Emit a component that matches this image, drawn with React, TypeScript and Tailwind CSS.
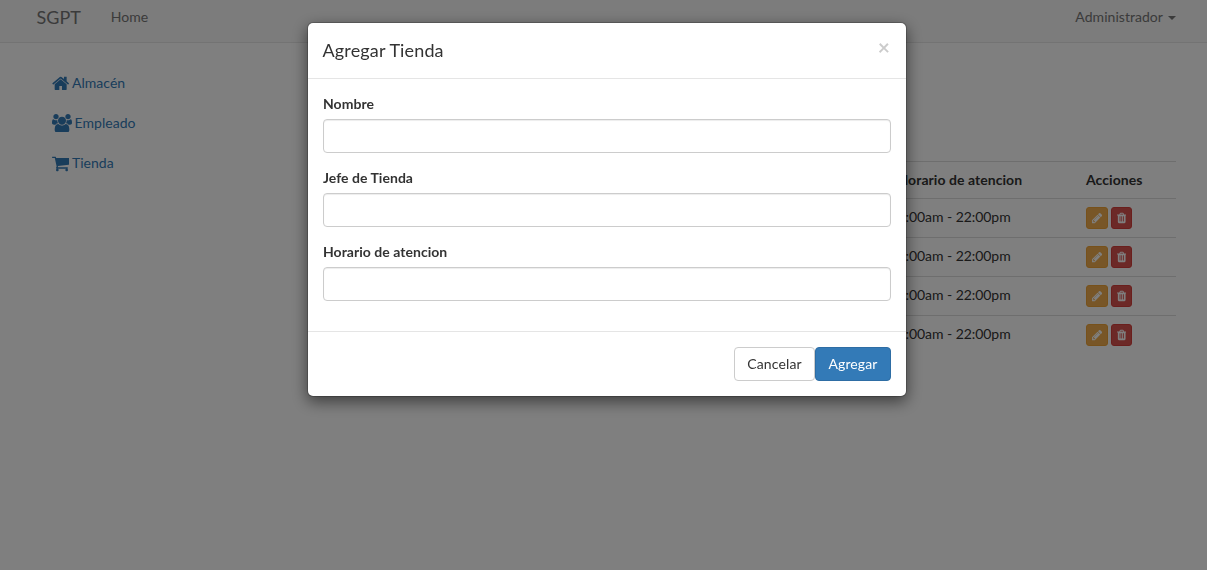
import React from 'react';

type IconProps = { d: string; viewBox: string; className: string };

const HOME =
  'M1472 992v480q0 26-19 45t-45 19h-384v-384h-256v384h-384q-26 0-45-19t-19-45v-480q0-1 .5-3t.5-3l575-474 575 474q1 2 1 6zm223-69l-62 74q-8 9-21 11h-3q-13 0-21-7l-692-577-692 577q-12 8-24 7-13-2-21-11l-62-74q-8-10-7-23.5t11-21.5l719-599q32-26 76-26t76 26l244 204v-195q0-14 9-23t23-9h192q14 0 23 9t9 23v408l219 182q10 8 11 21.5t-7 23.5z';
const USERS =
  'M593 896q-162 5-265 128h-134q-82 0-138-40.5t-56-118.5q0-353 124-353 6 0 43.5 21t97.5 42.5 119 21.5q67 0 133-23-5 37-5 66 0 139 81 256zm1071 637q0 120-73 189.5t-194 69.5h-874q-121 0-194-69.5t-73-189.5q0-53 3.5-103.5t14-109 26.5-108.5 43-97.5 62-81 85.5-53.5 111.5-20q10 0 43 21.5t73 48 107 48 135 21.5 135-21.5 107-48 73-48 43-21.5q61 0 111.5 20t85.5 53.5 62 81 43 97.5 26.5 108.5 14 109 3.5 103.5zm-1024-1277q0 106-75 181t-181 75-181-75-75-181 75-181 181-75 181 75 75 181zm704 384q0 159-112.5 271.5t-271.5 112.5-271.5-112.5-112.5-271.5 112.5-271.5 271.5-112.5 271.5 112.5 112.5 271.5zm576 225q0 78-56 118.5t-138 40.5h-134q-103-123-265-128 81-117 81-256 0-29-5-66 66 23 133 23 59 0 119-21.5t97.5-42.5 43.5-21q124 0 124 353zm-128-609q0 106-75 181t-181 75-181-75-75-181 75-181 181-75 181 75 75 181z';
const CART =
  'M704 1536q0 52-38 90t-90 38-90-38-38-90 38-90 90-38 90 38 38 90zm896 0q0 52-38 90t-90 38-90-38-38-90 38-90 90-38 90 38 38 90zm128-1088v512q0 24-16.5 42.5t-40.5 21.5l-1044 122q13 60 13 70 0 16-24 64h920q26 0 45 19t19 45-19 45-45 19h-1024q-26 0-45-19t-19-45q0-11 8-31.5t16-36 21.5-40 15.5-29.5l-177-823h-204q-26 0-45-19t-19-45 19-45 45-19h256q16 0 28.5 6.5t19.5 15.5 13 24.5 8 26 5.5 29.5 4.5 26h1201q26 0 45 19t19 45z';
const PENCIL =
  'M491 1536l91-91-235-235-91 91v107h128v128h107zm523-928q0-22-22-22-10 0-17 7l-542 542q-7 7-7 17 0 22 22 22 10 0 17-7l542-542q7-7 7-17zm-54-192l416 416-832 832h-416v-416zm683 96q0 53-37 90l-166 166-416-416 166-165q36-38 90-38 53 0 91 38l235 234q37 39 37 91z';
const TRASH =
  'M704 1376v-704q0-14-9-23t-23-9h-64q-14 0-23 9t-9 23v704q0 14 9 23t23 9h64q14 0 23-9t9-23zm256 0v-704q0-14-9-23t-23-9h-64q-14 0-23 9t-9 23v704q0 14 9 23t23 9h64q14 0 23-9t9-23zm256 0v-704q0-14-9-23t-23-9h-64q-14 0-23 9t-9 23v704q0 14 9 23t23 9h64q14 0 23-9t9-23zm-544-992h448l-48-117q-7-9-17-11h-317q-10 2-17 11zm928 32v64q0 14-9 23t-23 9h-96v948q0 83-47 143.5t-113 60.5h-832q-66 0-113-58.5t-47-141.5v-952h-96q-14 0-23-9t-9-23v-64q0-14 9-23t23-9h309l70-167q15-37 54-63t79-26h320q40 0 79 26t54 63l70 167h309q14 0 23 9t9 23z';

function Icon({ d, viewBox, className }: IconProps) {
  return (
    <svg viewBox={viewBox} className={className} fill="currentColor" aria-hidden="true">
      <path d={d} />
    </svg>
  );
}

function Navbar() {
  return (
    <nav className="flex h-[43px] items-start border-b border-[#e7e7e7] bg-[#f8f8f8] pr-[31px] pl-[36.5px] pt-[7px] leading-5 text-[#777]">
      <a className="text-lg leading-5">SGPT</a>
      <a className="ml-[30px]">Home</a>
      <a className="ml-auto flex items-center tracking-[0.04px]">
        Administrador
        <span className="ml-[5px] mt-px border-x-4 border-t-4 border-x-transparent border-t-[#777]" />
      </a>
    </nav>
  );
}

const links = [
  { label: 'Almacén', d: HOME, viewBox: '64 0 1664 1792', icon: 'mt-[0.8px] h-[18.67px] w-[17.33px]' },
  { label: 'Empleado', d: USERS, viewBox: '0 0 1920 1792', icon: 'mt-[0.8px] h-[18.67px] w-5' },
  { label: 'Tienda', d: CART, viewBox: '64 0 1664 1792', icon: 'mt-[0.8px] h-[18.67px] w-[17.33px]' },
];

function Sidebar() {
  return (
    <ul className="flex w-[268px] flex-col pt-[30px] text-[#337ab7]">
      {links.map((l) => (
        <li key={l.label} className="flex h-10 items-start gap-[2.6px] tracking-[0.04px]">
          <Icon d={l.d} viewBox={l.viewBox} className={l.icon} />
          <span>{l.label}</span>
        </li>
      ))}
    </ul>
  );
}

const hours = ['9:00am - 22:00pm', '9:00am - 22:00pm', '9:00am - 22:00pm', '9:00am - 22:00pm'];

function Stores() {
  return (
    <div className="mt-[118px] flex-1 text-[#333]">
      <div className="flex border-t border-[#ddd] py-2 pl-[577.5px] font-bold tracking-[0.05px]">
        <span className="w-[188.5px]">Horario de atencion</span>
        <span>Acciones</span>
      </div>
      {hours.map((h, i) => (
        <div key={i} className="flex border-t border-[#ddd] py-2 pl-[577.5px]">
          <span className="w-[188.5px] tracking-[-0.06px]">{h}</span>
          <span className="flex gap-[3px]">
            <button className="flex h-[22px] w-[22px] items-center justify-center rounded-[3px] border border-[#eea236] bg-[#f0ad4e] text-white">
              <Icon d={PENCIL} viewBox="128 0 1536 1792" className="h-3 w-[10.3px]" />
            </button>
            <button className="flex h-[22px] w-[21px] items-center justify-center rounded-[3px] border border-[#d43f3a] bg-[#d9534f] text-white">
              <Icon d={TRASH} viewBox="192 0 1408 1792" className="h-3 w-[9.43px]" />
            </button>
          </span>
        </div>
      ))}
    </div>
  );
}

function Field({ label }: { label: string }) {
  return (
    <label className="mb-[15px] block font-bold tracking-[0.03px]">
      <span className="mb-[5px] block">{label}</span>
      <input className="block h-[34px] w-full rounded border border-[#ccc] bg-white px-3 font-normal shadow-[inset_0_1px_1px_rgba(0,0,0,0.075)] outline-none" />
    </label>
  );
}

function StoreDialog() {
  return (
    <div className="fixed inset-0 flex items-start bg-black/50 pt-[22px] pl-[307px]">
      <div
        role="dialog"
        className="w-[600px] rounded-md border border-black/20 bg-white bg-clip-padding text-[#333] shadow-[0_5px_15px_rgba(0,0,0,0.5)]"
      >
        <div className="flex h-14 items-start justify-between border-b border-[#e5e5e5] pr-4 pl-[14.5px] pt-[15px]">
          <h4 className="text-lg leading-[25px] tracking-[0.14px]">Agregar Tienda</h4>
          <button className="-mt-0.5 text-[21px] leading-[21px] font-bold text-black opacity-20 [text-shadow:0_1px_0_#fff]">×</button>
        </div>
        <div className="p-[15px]">
          <Field label="Nombre" />
          <Field label="Jefe de Tienda" />
          <Field label="Horario de atencion" />
        </div>
        <div className="flex justify-end border-t border-[#e5e5e5] p-[15px] tracking-[0.12px]">
          <button className="h-[34px] w-[81px] rounded border border-[#ccc] bg-white">Cancelar</button>
          <button className="h-[34px] w-[76px] rounded border border-[#2e6da4] bg-[#337ab7] text-white">Agregar</button>
        </div>
      </div>
    </div>
  );
}

export default function App() {
  return (
    <div className="h-[570px] overflow-hidden bg-white font-['Lato',sans-serif] text-sm leading-5">
      <Navbar />
      <main className="flex pr-[31px] pl-[52px]">
        <Sidebar />
        <Stores />
      </main>
      <StoreDialog />
    </div>
  );
}
